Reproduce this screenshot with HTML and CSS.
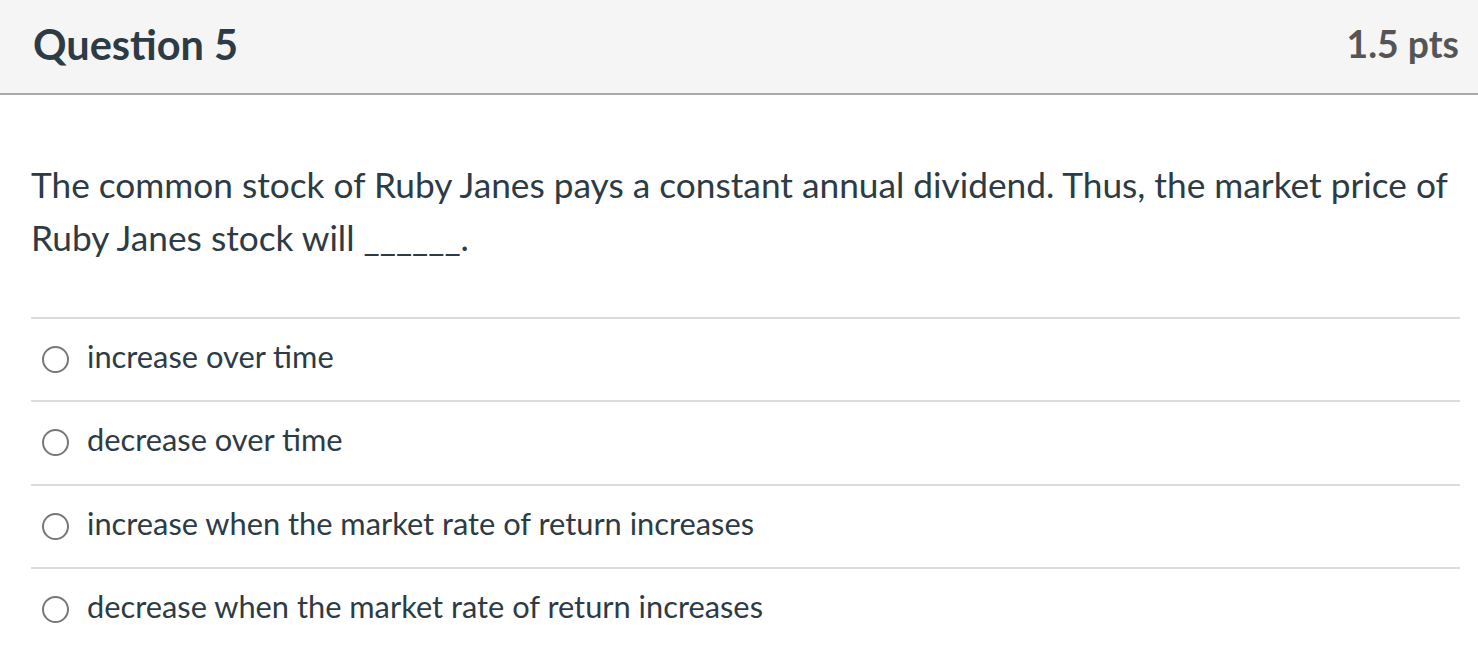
FILE: index.html
```html
<!DOCTYPE html>
<html>
<head>
<meta charset="utf-8">
<link rel="stylesheet" href="styles.css">
</head>
<body>
<div class="question">
  <div class="header">
    <h2 class="title">Question 5</h2>
    <div class="points">1.5 pts</div>
  </div>
  <div class="body">
    <p class="text">The common stock of Ruby Janes pays a constant annual dividend. Thus, the market price of Ruby Janes stock will ______.</p>
    <div class="answers">
      <label class="answer"><span class="radio"></span><span class="label">increase over time</span></label>
      <label class="answer"><span class="radio"></span><span class="label">decrease over time</span></label>
      <label class="answer"><span class="radio"></span><span class="label">increase when the market rate of return increases</span></label>
      <label class="answer"><span class="radio"></span><span class="label">decrease when the market rate of return increases</span></label>
    </div>
  </div>
</div>
</body>
</html>
```

FILE: styles.css
```css
html, body {
  margin: 0;
  padding: 0;
  background: #fff;
}
body {
  font-family: Lato, "Open Sans", sans-serif;
  color: #2d3b45;
}
.header {
  display: flex;
  align-items: center;
  justify-content: space-between;
  background: #f5f5f5;
  height: 87px;
  padding: 0 19px 6px 33px;
  border-bottom: 2px solid #aaaaaa;
  box-sizing: content-box;
}
.title {
  margin: 0;
  font-size: 41.5px;
  font-weight: 700;
  color: #2d3b45;
}
.points {
  font-size: 37.3px;
  font-weight: 700;
  color: #555555;
}
.body {
  padding: 0 18px 0 31px;
}
.text {
  margin: 0;
  padding: 63px 0 0 0;
  font-size: 35.25px;
  line-height: 53px;
}
.answers {
  margin-top: 53px;
}
.answer {
  display: flex;
  align-items: center;
  height: 81.33px;
  border-top: 2px solid #dcdcdc;
}
.radio {
  width: 23px;
  height: 23px;
  border: 2px solid #777;
  border-radius: 50%;
  margin-left: 11px;
  margin-right: 18px;
  flex: none;
}
.label {
  font-size: 30.8px;
  padding-bottom: 6px;
}
```
